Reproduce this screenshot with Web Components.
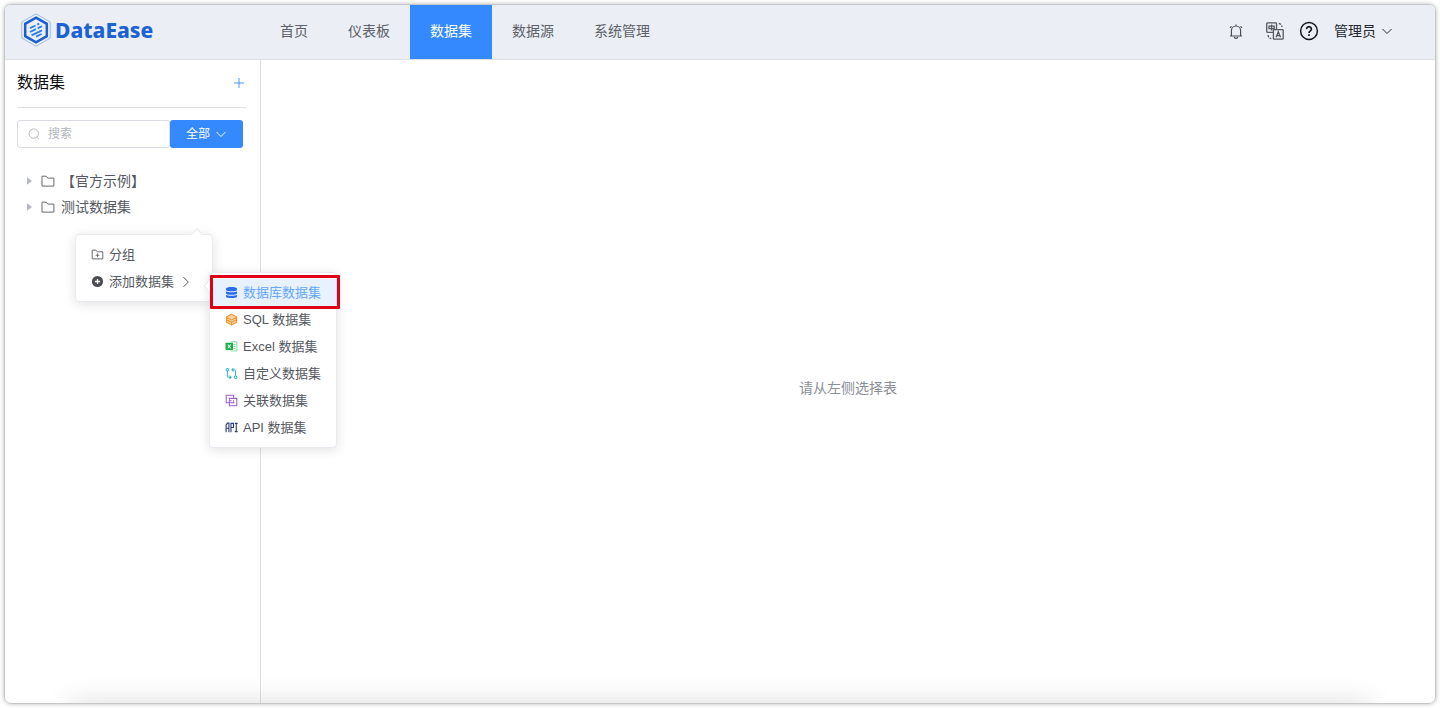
<!DOCTYPE html>
<html lang="zh-CN">
<head>
<meta charset="utf-8">
<title>DataEase</title>
<style>
html, body { height: 100%; margin: 0; }
body { font: 14px/20px "Liberation Sans", "Noto Sans CJK SC", sans-serif; color: #5a5e66; background: #fff; }
</style>
</head>
<body>
<de-app></de-app>
<script>
const ICONS = {
  bell: '<svg viewBox="0 0 16 16" fill="none" stroke="#4a4e56" stroke-width="1.2"><path d="M3.4 12.8V7.6a4.6 4.6 0 0 1 9.2 0v5.2M2 13h12M6.3 14a1.7 1.3 0 0 0 3.4 0M8 1.6v1.400M2 4.800l1.500-1.400M14 4.800l-1.500-1.400"/></svg>',
  lang: '<svg viewBox="0 0 18 18" fill="none" stroke="#54585f" stroke-width="1.3"><path d="M7.200 10.300H1.500a.8.8 0 0 1-.8-.8V1.700c0-.5.3-.8.8-.8h8.200c.5 0 .8.3.8.8v5.500M8.200 7.600h8.200c.5 0 .8.3.8.8v8c0 .5-.3.8-.8.8H8.200a.8.8 0 0 1-.8-.8v-8c0-.5.3-.8.8-.8zM3 4.200h5.200v2.500H3zM5.600 2.400v6.200M10.100 15.300l2.200-5.500 2.200 5.500M11 13.600h2.600"/><path d="M12.800 1.500c1.800.2 3 1.500 3.200 3.500M2 13c.2 2 1.200 3.200 3.300 3.600" stroke-dasharray="2.400 1.200"/></svg>',
  help: '<svg viewBox="0 0 20 20" fill="none" stroke="#15181d" stroke-width="1.5"><circle cx="10" cy="10" r="8.4"/><path d="M7.600 8.100a2.400 2.300 0 1 1 3.800 1.800c-.9.6-1.400 1-1.400 2.100M10 13.200v1.700" stroke-width="1.700"/></svg>',
  down: '<svg viewBox="0 0 12 12" fill="none" stroke="currentColor"><path d="M1.500 4 6 8.500 10.500 4"/></svg>',
  right: '<svg viewBox="0 0 12 12" fill="none" stroke="currentColor"><path d="M3.500 1.200 8.300 6l-4.800 4.800"/></svg>',
  plus: '<svg viewBox="0 0 12 12" fill="none" stroke="#4a94f8"><path d="M6 1v10M1 6h10"/></svg>',
  search: '<svg viewBox="0 0 12 12" fill="none" stroke="#b4b9c2"><circle cx="5.800" cy="5.600" r="4.700"/><path d="m9 9.200 2 2"/></svg>',
  caret: '<svg viewBox="0 0 12 12" fill="#b4b8bf"><path d="M4 2.200 9 6l-5 3.800z"/></svg>',
  folder: '<svg viewBox="0 0 14 14" fill="none" stroke="#666a72"><path d="M1 2.200h4.200l1.600 1.900h6.100v8H1z"/></svg>',
  folderAdd: '<svg viewBox="0 0 14 14" fill="none" stroke="#5d6067"><path d="M1.300 2.300h4l1.500 1.800h5.900v7.600H1.300zM7 5.800v4M5 7.800h4"/></svg>',
  circlePlus: '<svg viewBox="0 0 14 14"><circle cx="7" cy="7" r="6" fill="#4b4d52"/><path d="M7 4.200v5.600M4.200 7h5.600" stroke="#fff" stroke-width="1.400"/></svg>',
  db: '<svg viewBox="0 0 14 14" fill="#2b6de8"><path d="M1 3c0-2.400 12-2.400 12 0v1c0 2.200-12 2.200-12 0zM1 5.700c2 1.500 10 1.500 12 0v2.200c0 2.200-12 2.200-12 0zM1 9.500c2 1.500 10 1.500 12 0v1.700c0 2.300-12 2.300-12 0z"/></svg>',
  sql: '<svg viewBox="0 0 14 14"><path d="m7 .8 5.900 3.400v5.900L7 13.300 1.100 10.100V4.200z" fill="#fbd3a2"/><path d="m7 1.200 5.500 3.200v5.400L7 12.900 1.500 9.800V4.400zM1.500 7.300 7 10l5.500-2.700M7 10v3M1.500 4.700 7 7.400l5.500-2.700" fill="none" stroke="#f3942b" stroke-width="1.100"/></svg>',
  excel: '<svg viewBox="0 0 14 14"><path d="M6 2h6.800v9.800H6M9 4.800h2.500M9 7h2.500M9 9.200h2.500" fill="none" stroke="#6ed68c" stroke-width=".9"/><rect x=".6" y="2.900" width="8" height="8" rx=".6" fill="#18b046"/><path d="m3.100 4.900 3 4M6.100 4.900l-3 4" stroke="#fff" stroke-width="1.100"/></svg>',
  custom: '<svg viewBox="0 0 14 14" fill="none" stroke="#36b5c9" stroke-width="1.100"><circle cx="2.600" cy="2.900" r="1.400"/><circle cx="11.400" cy="11" r="1.400"/><path d="M2.600 4.300v5.300c0 1 .5 1.400 1.400 1.400h2.300M4.900 9.300 6.600 11l-1.700 1.700M11.400 9.600V4.300c0-1-.5-1.400-1.400-1.400H7.700M9.100 1.200 7.400 2.900l1.700 1.700"/></svg>',
  union: '<svg viewBox="0 0 14 14" fill="none" stroke="#9a5fd0" stroke-width="1.100"><path d="M4.600 9.300H1.300V1.400h8v3.300M4.700 7.200V4.700h8v8h-8V9.300M9.300 6.800v2.500H4.700V7.200h2.400"/></svg>',
  api: '<svg viewBox="0 0 14 14" fill="none" stroke="#2a3c78" stroke-width="1.200"><path d="M1.200 12V4.200L2.600 2.300h1.600V12M1.200 7.800h3M6.400 12V2.500h2.700V7H6.400M10.600 2.500h3M10.600 11.500h3M12.100 2.500v9"/></svg>',
  logo: '<svg viewBox="0 0 32 34" fill="none"><path d="m16 .8 14.200 8.100v16.200L16 33.200 1.800 25.100V8.900z" stroke="#93b5ea" stroke-width=".9"/><path d="m16 4.700 10.800 6.100v12.400L16 29.300 5.200 23.200V10.800z" stroke="#1b5fd0" stroke-width="2.500"/><path d="m10 15.200 5.600-2.700M17.300 11.700l2-1M10 19l6-2.900M17.600 15.300l4.400-2.100M11.500 22.300l10.500-5M16 23.700l5.600-2.700" stroke="#2f80e8" stroke-width="1.900"/></svg>'
};

function define(name, css, html) {
  customElements.define(name, class extends HTMLElement {
    connectedCallback() {
      if (this.shadowRoot) return;
      const markup = typeof html === 'function' ? html(this) : html;
      this.attachShadow({ mode: 'open' }).innerHTML =
        `<style>:host,*{box-sizing:border-box}button{font:inherit;color:inherit;margin:0;border:0;background:none;cursor:pointer}${css}</style>${markup}`;
    }
  });
}

define('de-icon',
  ':host{display:block;flex:none;width:var(--size,14px);height:var(--size,14px)} svg{display:block;width:100%;height:100%}',
  el => ICONS[el.getAttribute('name')]);

define('de-brand',
  `:host{display:flex;width:255px;padding:0 0 4px 15px}
   a{display:flex;align-items:center;gap:3px;color:#1d62d2;text-decoration:none;font:800 21px/32px "Noto Sans","Open Sans",sans-serif}
   svg{display:block;width:32px;height:34px}`,
  `<a href="#">${ICONS.logo}<span>DataEase</span></a>`);

define('de-nav-item',
  `:host{display:flex}
   a{display:flex;align-items:center;padding:0 20px 2px;color:#5c6068;text-decoration:none}
   :host([active]) a{background:#3489ff;color:#fff}`,
  '<a href="#"><slot></slot></a>');

define('de-header',
  `:host{display:flex;height:55px;background:#ebeff5;border-bottom:1px solid #dcdfe4}
   nav{display:flex;flex:1}
   .tools{display:flex;align-items:center;padding:0 42px 2px 0}
   button{display:flex;align-items:center;padding:0}
   .bell{--size:16px;margin-right:22px}
   .lang{--size:18px;margin-right:15px}
   .help{--size:20px;margin-right:15px}
   .user{gap:5px;color:#24272d;--size:12px}`,
  `<de-brand></de-brand>
   <nav><de-nav-item>首页</de-nav-item><de-nav-item>仪表板</de-nav-item><de-nav-item active>数据集</de-nav-item><de-nav-item>数据源</de-nav-item><de-nav-item>系统管理</de-nav-item></nav>
   <div class="tools">
     <button class="bell" aria-label="消息"><de-icon name="bell"></de-icon></button>
     <button class="lang" aria-label="语言"><de-icon name="lang"></de-icon></button>
     <button class="help" aria-label="帮助"><de-icon name="help"></de-icon></button>
     <button class="user">管理员<de-icon name="down"></de-icon></button>
   </div>`);

define('de-tree-item',
  `:host{display:flex;align-items:center;height:26px;padding-left:6px;color:#55585f}
   .caret{--size:12px;margin-right:6px}
   .folder{margin-right:6px}`,
  '<de-icon class="caret" name="caret"></de-icon><de-icon class="folder" name="folder"></de-icon><slot></slot>');

define('de-sidebar',
  `:host{display:block;width:256px;padding:0 14px 0 12px;border-right:1px solid #dcdfe3}
   header{display:flex;align-items:center;justify-content:space-between;height:48px;padding-bottom:2px;border-bottom:1px solid #dcdee2}
   h1{margin:0;font-size:16px;line-height:24px;font-weight:400;color:#0c0d0f}
   .add{padding:0 1px;--size:12px}
   .filter{display:flex;height:28px;margin:12px 3px 20px 0;font-size:12px}
   label{display:flex;flex:1;align-items:center;gap:8px;min-width:0;padding-left:10px;border:1px solid #d9dce3;border-radius:3px;--size:12px}
   input{flex:1;min-width:0;padding:0;border:0;outline:0;background:none;font:inherit;color:#5a5e66}
   input::placeholder{color:#b2b6be;opacity:1}
   .all{display:flex;align-items:center;justify-content:center;gap:5px;width:73px;padding:0;border-radius:3px;background:#3489ff;color:#fff;--size:12px}`,
  `<header><h1>数据集</h1><button class="add" aria-label="新建"><de-icon name="plus"></de-icon></button></header>
   <div class="filter">
     <label><de-icon name="search"></de-icon><input type="text" placeholder="搜索" aria-label="搜索"></label>
     <button class="all">全部<de-icon name="down"></de-icon></button>
   </div>
   <de-tree-item>【官方示例】</de-tree-item>
   <de-tree-item>测试数据集</de-tree-item>`);

define('de-menu-item',
  `:host{display:block;--size:13px}
   button{display:flex;align-items:center;gap:5px;width:100%;height:27px;padding:0 15px;font-size:13px;color:#55585f;text-align:left;white-space:nowrap}
   :host([active]) button{background:#e8f2ff;color:#66a6fb}
   .more{--size:12px;margin-left:1px}`,
  el => `<button role="menuitem"><de-icon name="${el.getAttribute('icon')}"></de-icon><slot></slot>${el.hasAttribute('more') ? '<de-icon class="more" name="right"></de-icon>' : ''}</button>`);

define('de-menu',
  `:host{position:absolute;display:block;padding:6px 0;border:1px solid #e8eaf0;border-radius:4px;background:#fff;box-shadow:0 2px 12px rgba(0,0,0,.12)}
   i{position:absolute;width:8px;height:8px;background:#fff;border:1px solid #e8eaf0;border-right:0;border-bottom:0}
   :host([arrow=top]) i{top:-5px;right:11px;transform:rotate(45deg)}
   :host([arrow=left]) i{top:9px;left:-5px;transform:rotate(-45deg)}`,
  '<i></i><slot></slot>');

define('de-app',
  `:host{display:flex;height:100vh;padding:4px;background:#fff}
   .frame{display:flex;flex:1;border-radius:7px;box-shadow:0 0 4px rgba(0,0,0,.28)}
   .window{position:relative;display:flex;flex:1;flex-direction:column;overflow:hidden;border:1px solid #c6c7c9;border-radius:7px;background:#fff}
   .body{display:flex;flex:1}
   main{display:flex;flex:1;align-items:center;justify-content:center;padding-top:13px;color:#8b8f98}
   .shade{position:absolute;left:64px;right:64px;bottom:-24px;height:24px;box-shadow:0 0 28px rgba(0,0,0,.14)}
   .group{top:229px;left:70px;width:138px}
   .types{top:267px;left:204px;width:128px}
   .mark{position:absolute;top:270px;left:205px;width:130px;height:34px;border:3px solid #e00016;border-radius:1px;pointer-events:none}`,
  `<div class="frame"><div class="window">
     <de-header></de-header>
     <div class="body"><de-sidebar></de-sidebar><main>请从左侧选择表</main></div>
     <div class="shade"></div>
     <de-menu class="group" arrow="top" role="menu">
       <de-menu-item icon="folderAdd">分组</de-menu-item>
       <de-menu-item icon="circlePlus" more>添加数据集</de-menu-item>
     </de-menu>
     <de-menu class="types" arrow="left" role="menu">
       <de-menu-item icon="db" active>数据库数据集</de-menu-item>
       <de-menu-item icon="sql">SQL 数据集</de-menu-item>
       <de-menu-item icon="excel">Excel 数据集</de-menu-item>
       <de-menu-item icon="custom">自定义数据集</de-menu-item>
       <de-menu-item icon="union">关联数据集</de-menu-item>
       <de-menu-item icon="api">API 数据集</de-menu-item>
     </de-menu>
     <div class="mark"></div>
   </div></div>`);
</script>
</body>
</html>
